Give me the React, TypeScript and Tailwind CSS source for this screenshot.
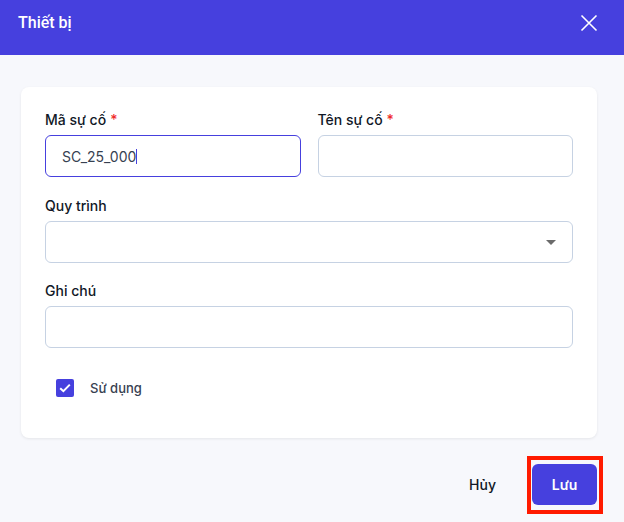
import React from "react";

const inter = { fontFamily: "Inter, 'Noto Sans', sans-serif" };

function Label({ text, required }: { text: string; required?: boolean }) {
  return (
    <div className="h-5 text-[14px] leading-5 font-medium text-[#111827]">
      {text}
      {required && <span className="ml-1 text-[#ef2b2b]">*</span>}
    </div>
  );
}

export default function App() {
  return (
    <div className="relative w-[624px] h-[522px] bg-[#f7f8fc] overflow-hidden" style={inter}>
      <div className="h-[55px] bg-[#4640de] flex items-start justify-between pl-[18px] pr-[26px] pt-[13px]">
        <div
          className="text-white text-[16px] leading-5 font-medium"
          style={{ fontFamily: "Roboto, 'Liberation Sans', Arial, sans-serif" }}
        >
          Thiết bị
        </div>
        <svg width="18" height="18" viewBox="0 0 18 18" className="mt-[1px]">
          <path d="M1.5 1.5 L16.5 16.5 M16.5 1.5 L1.5 16.5" stroke="white" strokeWidth="1.6" fill="none" />
        </svg>
      </div>

      <div className="pt-8 pl-[21px]">
        <div className="w-[576px] h-[351px] bg-white rounded-[8px] shadow-[0_1px_3px_rgba(0,0,0,0.08)] px-6 pt-[23px]">
          <div className="flex gap-[17px]">
            <div className="flex-1">
              <Label text="Mã sự cố" required />
              <div className="mt-[5px] h-[42px] rounded-[6px] border border-[#4640de] bg-white flex items-center px-4 text-[14px] text-[#374151]">
                <span>SC_25_000</span>
                <span className="inline-block w-px h-[15px] bg-[#4640de]" />
              </div>
            </div>
            <div className="flex-1">
              <Label text="Tên sự cố" required />
              <div className="mt-[5px] h-[42px] rounded-[6px] border border-[#c6d2e3] bg-white" />
            </div>
          </div>

          <div className="mt-[19px]">
            <Label text="Quy trình" />
            <div className="mt-[5px] h-[42px] rounded-[6px] border border-[#c6d2e3] bg-white flex items-center justify-end pr-[16px]">
              <svg width="10" height="5" viewBox="0 0 10 5">
                <path d="M0 0 L10 0 L5 5 Z" fill="#6b6b6b" />
              </svg>
            </div>
          </div>

          <div className="mt-[18px]">
            <Label text="Ghi chú" />
            <div className="mt-[5px] h-[42px] rounded-[6px] border border-[#c6d2e3] bg-white" />
          </div>

          <div className="mt-[30px] ml-[11px] flex items-center gap-4 h-[20px]">
            <div className="w-[18px] h-[18px] rounded-[2px] bg-[#4640de] flex items-center justify-center">
              <svg width="12" height="10" viewBox="0 0 12 10">
                <path d="M1.2 5.2 L4.4 8.2 L10.8 1.6" stroke="white" strokeWidth="2" fill="none" />
              </svg>
            </div>
            <span className="text-[13px] leading-5 font-medium text-[#374151]">Sử dụng</span>
          </div>
        </div>
      </div>

      <div className="flex justify-end items-center gap-[17px] pr-[27px] mt-[26px]">
        <button className="w-[65px] h-[41px] text-[14px] font-medium text-[#111827]">Hủy</button>
        <button className="w-[65px] h-[41px] rounded-[6px] bg-[#4640de] text-white text-[14px] font-semibold">
          Lưu
        </button>
      </div>

      <div className="absolute left-[527px] top-[456px] w-[76px] h-[58px] border-4 border-[#ff1a00]" />
    </div>
  );
}
